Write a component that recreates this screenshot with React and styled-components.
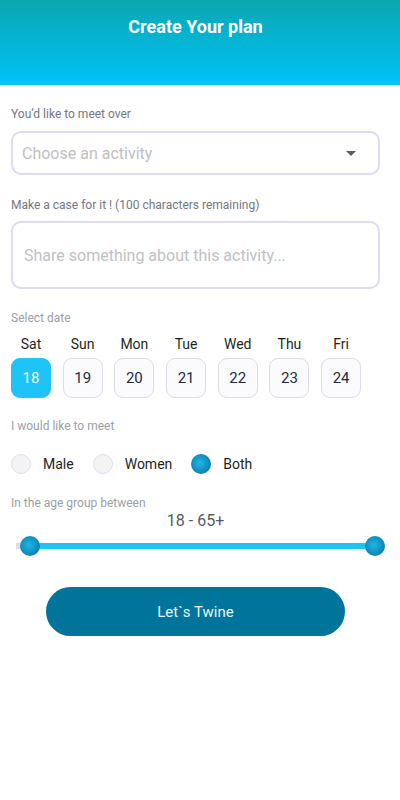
import React from "react";
import styled, { createGlobalStyle } from "styled-components";

const Global = createGlobalStyle`
  html, body { margin: 0; padding: 0; background: #ffffff; }
  body { font-family: Roboto, "Noto Sans", "Liberation Sans", sans-serif; }
  * { box-sizing: border-box; }
`;

const Page = styled.div`
  width: 400px;
  min-height: 800px;
  background: #fff;
`;

const Header = styled.header`
  height: 85px;
  background: linear-gradient(180deg, #0aa7b0 0%, #04b6d8 55%, #00c3f9 100%);
  padding: 16px 9px 0 0;
  display: flex;
  justify-content: center;
  align-items: flex-start;
`;

const Title = styled.h1`
  margin: 0;
  color: #fff;
  font-size: 18px;
  font-weight: 700;
  line-height: 22px;
`;

const Content = styled.main`
  padding: 21px 20px 0 11px;
  display: flex;
  flex-direction: column;
`;

const Label = styled.div`
  font-size: 12px;
  line-height: 16px;
  color: ${(p) => (p.$light ? "#9aa0a8" : "#737782")};
  margin-top: ${(p) => p.$mt || 0}px;
`;

const Field = styled.div`
  margin-top: ${(p) => p.$mt || 0}px;
  height: ${(p) => p.$h}px;
  border: 2px solid #dcdcee;
  border-radius: 10px;
  display: flex;
  align-items: center;
  justify-content: space-between;
  padding: 0 22px 0 ${(p) => p.$pl || 9}px;
  font-size: 16px;
  color: #c0c0c4;
`;

const Caret = styled.span`
  width: 0;
  height: 0;
  border-left: 5.5px solid transparent;
  border-right: 5.5px solid transparent;
  border-top: 5.5px solid #5f5f5f;
`;

const Days = styled.div`
  margin-top: 9px;
  display: grid;
  grid-template-columns: repeat(7, 40px);
  column-gap: 11.7px;
  row-gap: 5px;
`;

const DayName = styled.div`
  font-size: 14px;
  line-height: 18px;
  color: #1f1f22;
  text-align: center;
`;

const DateBox = styled.div`
  height: 40px;
  border-radius: 9px;
  display: flex;
  align-items: center;
  justify-content: center;
  font-size: 15px;
  color: ${(p) => (p.$active ? "#ffffff" : "#1f2a3d")};
  background: ${(p) => (p.$active ? "#1ec4f6" : "#fbfbfe")};
  border: 1.5px solid ${(p) => (p.$active ? "#1ec4f6" : "#dcdcea")};
`;

const RadioRow = styled.div`
  margin-top: 20px;
  display: flex;
  align-items: center;
  gap: 19px;
`;

const RadioItem = styled.label`
  display: flex;
  align-items: center;
  gap: 12px;
  font-size: 14px;
  color: #1f1f22;
`;

const Circle = styled.span`
  width: 20px;
  height: 20px;
  border-radius: 50%;
  background: ${(p) =>
    p.$on
      ? "radial-gradient(circle at 45% 45%, #22b4e6 0%, #1296c6 45%, #0a6a94 100%)"
      : "#f3f3f3"};
  border: ${(p) => (p.$on ? "none" : "1px solid #dde0ee")};
`;

const Range = styled.div`
  font-size: 16px;
  line-height: 20px;
  color: #5a5a5e;
  text-align: center;
`;

const Slider = styled.div`
  position: relative;
  margin: 5px 0 0 5px;
  height: 20px;
  width: 368px;
  display: flex;
  align-items: center;
`;

const Track = styled.div`
  height: 6px;
  width: 100%;
  background: linear-gradient(90deg, #dcdcee 0 14px, #1ec4f6 14px 100%);
`;

const Thumb = styled.span`
  position: absolute;
  top: 0;
  left: ${(p) => p.$x}px;
  width: 20px;
  height: 20px;
  border-radius: 50%;
  background: radial-gradient(circle at 45% 45%, #22b4e6 0%, #1296c6 45%, #0a6a94 100%);
`;

const Button = styled.button`
  margin: 31px auto 0;
  width: 299px;
  height: 49px;
  border: none;
  border-radius: 25px;
  background: #00749a;
  color: #e8f4f8;
  font-family: inherit;
  font-size: 15px;
`;

const days = [
  ["Sat", 18],
  ["Sun", 19],
  ["Mon", 20],
  ["Tue", 21],
  ["Wed", 22],
  ["Thu", 23],
  ["Fri", 24],
];

export default function App() {
  return (
    <Page>
      <Global />
      <Header>
        <Title>Create Your plan</Title>
      </Header>
      <Content>
        <Label>You’d like to meet over</Label>
        <Field $mt={9} $h={44}>
          <span>Choose an activity</span>
          <Caret />
        </Field>
        <Label $mt={22}>Make a case for it ! (100 characters remaining)</Label>
        <Field $mt={8} $h={68} $pl={11}>
          <span>Share something about this activity...</span>
        </Field>
        <Label $mt={21} $light>Select date</Label>
        <Days>
          {days.map(([d]) => (
            <DayName key={d}>{d}</DayName>
          ))}
          {days.map(([d, n]) => (
            <DateBox key={n} $active={n === 18}>{n}</DateBox>
          ))}
        </Days>
        <Label $mt={20} $light>I would like to meet</Label>
        <RadioRow>
          <RadioItem><Circle />Male</RadioItem>
          <RadioItem><Circle />Women</RadioItem>
          <RadioItem><Circle $on />Both</RadioItem>
        </RadioRow>
        <Label $mt={21} $light>In the age group between</Label>
        <Range>18 - 65+</Range>
        <Slider>
          <Track />
          <Thumb $x={4} />
          <Thumb $x={349} />
        </Slider>
        <Button>Let`s Twine</Button>
      </Content>
    </Page>
  );
}
